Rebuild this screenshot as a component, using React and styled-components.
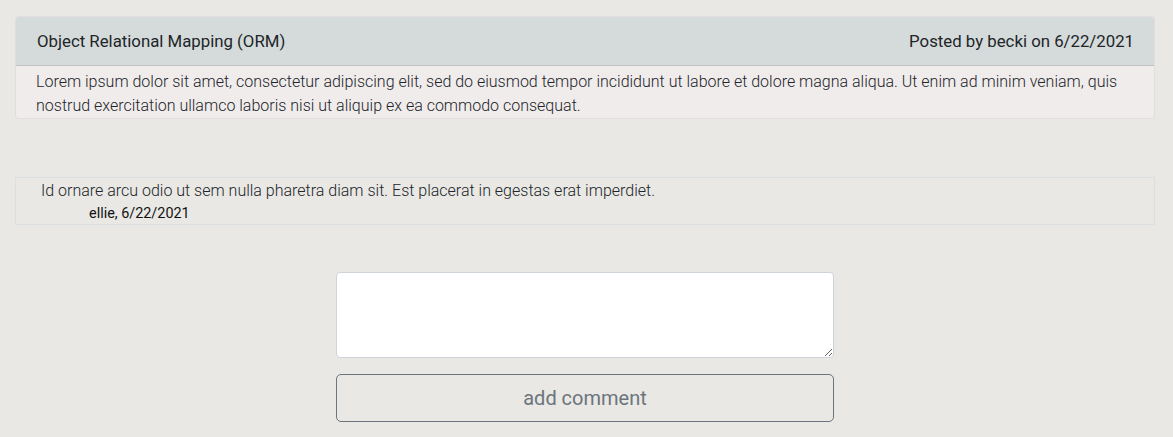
import React from 'react';
import styled, { createGlobalStyle } from 'styled-components';

const GlobalStyle = createGlobalStyle`
  body {
    margin: 0;
    background-color: #e9e8e4;
    font-family: Roboto, "Liberation Sans", sans-serif;
    color: #212529;
    font-size: 16px;
    line-height: 1.5;
  }
`;

const Page = styled.div`
  padding: 16px 18px 16px 15px;
  display: flex;
  flex-direction: column;
`;

const Card = styled.div`
  border: 1px solid rgba(0, 0, 0, 0.06);
  border-radius: 4px;
  overflow: hidden;
  background-color: #f1ecec;
`;

const CardHeader = styled.div`
  display: flex;
  justify-content: space-between;
  padding: 12px 20px 12px 21px;
  font-size: 16.8px;
  line-height: 24px;
  background-color: #d5dbda;
  border-bottom: 1px solid #bfc3c2;
`;

const CardBody = styled.p`
  margin: 0;
  padding: 4px 20px 0;
  font-weight: 300;
`;

const Comment = styled.div`
  margin-top: 58px;
  border: 1px solid #dadfe2;
  padding: 1px 25px 0;
`;

const CommentText = styled.div`
  font-weight: 300;
`;

const CommentMeta = styled.div`
  padding-left: 48px;
  font-size: 14.4px;
  line-height: 21px;
  font-weight: 400;
  color: #111;
`;

const Form = styled.form`
  margin-top: 47px;
  display: flex;
  flex-direction: column;
  align-items: center;
  gap: 16px;
`;

const TextArea = styled.textarea`
  box-sizing: border-box;
  width: 498px;
  height: 86px;
  padding: 6px 12px;
  font-family: inherit;
  font-size: 16px;
  line-height: 1.5;
  border: 1px solid #ced4da;
  border-radius: 4px;
  background: #fff;
`;

const Button = styled.button`
  box-sizing: border-box;
  width: 498px;
  height: 48px;
  padding: 8px 16px;
  font-family: inherit;
  font-size: 20px;
  line-height: 1.5;
  color: #6c757d;
  background: transparent;
  border: 1px solid #6c757d;
  border-radius: 5px;
  cursor: pointer;
`;

export default function App() {
  return (
    <>
      <GlobalStyle />
      <Page>
        <Card>
          <CardHeader>
            <span>Object Relational Mapping (ORM)</span>
            <span>Posted by becki on 6/22/2021</span>
          </CardHeader>
          <CardBody>
            Lorem ipsum dolor sit amet, consectetur adipiscing elit, sed do eiusmod tempor incididunt ut labore et dolore magna aliqua. Ut enim ad minim veniam, quis nostrud exercitation ullamco laboris nisi ut aliquip ex ea commodo consequat.
          </CardBody>
        </Card>
        <Comment>
          <CommentText>Id ornare arcu odio ut sem nulla pharetra diam sit. Est placerat in egestas erat imperdiet.</CommentText>
          <CommentMeta>ellie, 6/22/2021</CommentMeta>
        </Comment>
        <Form onSubmit={(e) => e.preventDefault()}>
          <TextArea rows={3} />
          <Button type="submit">add comment</Button>
        </Form>
      </Page>
    </>
  );
}
